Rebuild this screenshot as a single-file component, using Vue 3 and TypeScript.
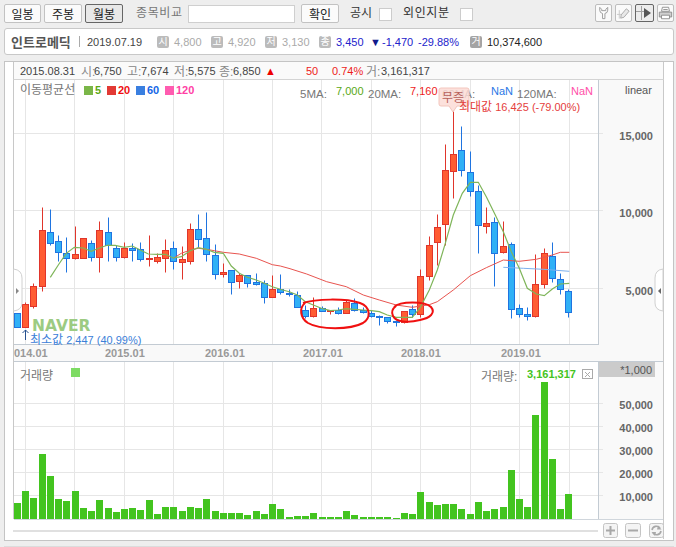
<script setup lang="ts">
type Row = [number, number, number, number, number]
const z3: Row[] = [
  [370,410,370,410,0],[335,410,343,410,1],[280,355,289,347,1],[52,303,120,287,1],[58,165,127,158,0],
  [135,212,154,185,0],[142,245,190,203,0],[108,208,193,203,1],[145,203,145,203,1],[150,212,160,200,0],
  [94,245,120,200,1],[82,212,127,166,0],[165,212,175,200,0],[157,205,175,200,1],[160,212,174,179,0],
  [157,212,178,206,0],[135,228,203,205,1],[190,220,202,212,1],[148,245,181,203,1],[154,236,175,212,0],
  [168,268,208,215,1],[100,223,118,212,1],[72,172,118,148,0],[67,212,145,193,0],[163,268,196,253,0],
  [220,262,247,253,1],[241,313,241,277,0],[250,295,256,274,1],[256,290,256,280,0],[250,285,277,283,0],
  [270,340,280,322,0],[256,322,298,322,1],[253,313,298,307,0],[298,318,310,313,0]
]
const z4: Row[] = [
  [572,622,586,622,0],[615,655,631,647,0],[590,650,625,647,1],[618,632,625,632,0],[630,642,630,632,1],
  [622,642,631,640,0],[600,640,607,640,1],[594,634,610,631,0],[620,640,631,637,0],[630,652,640,649,0],
  [644,674,649,652,0],[650,670,652,664,0],[660,677,664,667,0],[634,670,634,667,1],[614,650,628,643,0],
  [508,652,529,643,1],[408,541,436,529,1],[343,496,382,427,1],[133,436,211,373,1],[30,295,163,214,1],
  [79,229,151,211,0],[154,289,217,274,0],[256,460,274,376,0],[322,400,370,379,1],[352,559,367,460,0],
  [364,460,439,457,1],[427,655,433,628,0],[612,650,625,643,0],[622,661,643,649,0],[463,652,553,649,1],
  [445,565,460,553,1],[427,547,469,535,0],[520,583,538,568,0],[568,652,574,637,0]
]
const center = (i: number) => Math.round(14 + 8.23 * i) + 3.5
const snap = (v: number) => Math.round(v) + 0.5
const conv = (r: Row, base: number, offset: number, i: number) => {
  const y = (n: number) => snap(base + n / 3)
  const top = y(r[2])
  return {
    id: offset + i,
    x: center(offset + i),
    wt: y(r[0]),
    wb: y(r[1]),
    top,
    h: Math.max(y(r[3]) - top, 1),
    up: r[4] === 1
  }
}
const candles = [...z3.map((r, i) => conv(r, 190, 0, i)), ...z4.map((r, i) => conv(r, 100, 34, i))]

const volTops = [
  429,393,414,282,348,417,423,393,444,453,420,444,456,447,444,450,420,462,441,441,453,441,444,417,453,459,459,459,465,453,462,432,447,471,468,468,459,471,471,471,
  453,465,471,471,471,471,474,459,462,396,426,435,432,432,447,462,426,453,447,441,330,417,441,165,66,297,447,402
]
const volumes = volTops.map((t, i) => ({ id: i, x: Math.round(14 + 8.23 * i), y: 360 + t / 3, h: 159 - t / 3 }))

const pts = (a: number[][], bx: number, by: number) =>
  a.map(p => `${(bx + p[0] / 3).toFixed(1)},${(by + p[1] / 3).toFixed(1)}`).join(' ')
const ma5 =
  pts([[151,262],[175,225],[199,190],[223,172],[250,174],[274,184],[298,174],[322,166],[346,166],[373,172],[397,168],[421,180],[445,192],[472,193],[496,193],[520,204],[544,200],[571,182],[595,173],[619,178],[643,187],[670,190],[694,228],[718,250],[742,262],[769,270],[793,280],[817,290],[841,298]], 0, 190) +
  ' ' +
  pts([[0,576],[22,585],[46,605],[70,615],[94,625],[121,632],[145,630],[169,626],[193,628],[220,630],[244,632],[268,635],[292,645],[319,652],[343,652],[367,652],[391,622],[418,570],[442,510],[466,430],[490,345],[517,280],[541,247],[565,247],[589,290],[616,345],[640,395],[664,455],[688,505],[712,565],[739,582],[763,587],[787,567],[811,552],[838,550]], 290, 100)
const ma20 =
  pts([[520,205],[544,190],[571,180],[595,175],[619,178],[643,182],[670,187],[718,192],[769,205],[817,224],[841,228]], 0, 190) +
  ' ' +
  pts([[0,506],[50,522],[110,545],[169,560],[220,585],[268,600],[319,615],[367,622],[418,614],[442,605],[490,570],[541,527],[589,503],[640,480],[688,484],[739,478],[787,465],[811,457],[838,457]], 290, 100)
const ma60 = pts([[640,502],[700,505],[760,508],[838,514]], 290, 100)

const gridX = [25.5, 74.5, 124.5, 173.5, 223.5, 272.5, 321.5, 371.5, 420.5, 470.5, 519.5, 569.5]
const priceGrid = [
  { y: 133.5, label: '15,000' },
  { y: 210.5, label: '10,000' },
  { y: 288.5, label: '5,000' }
]
const volGrid = [
  { y: 403.5, label: '50,000' },
  { y: 426.5, label: '40,000' },
  { y: 449.5, label: '30,000' },
  { y: 472.5, label: '20,000' },
  { y: 495.5, label: '10,000' }
]
const axisDates = [
  { x: 14, t: '014.01' },
  { x: 105, t: '2015.01' },
  { x: 205, t: '2016.01' },
  { x: 303, t: '2017.01' },
  { x: 401, t: '2018.01' },
  { x: 501, t: '2019.01' }
]
const legend = [
  { x: 84, c: '#7ab648', tc: '#5aa815', t: '5' },
  { x: 107, c: '#e23a35', tc: '#f00f0f', t: '20' },
  { x: 136, c: '#3a7fe0', tc: '#1466e6', t: '60' },
  { x: 165, c: '#ff5cb0', tc: '#ff3fa5', t: '120' }
]
const maLabels = [
  { x: 300, t: '5MA:', vx: 336, v: '7,000', c: '#5aa815' },
  { x: 368, t: '20MA:', vx: 410, v: '7,160', c: '#ee1c1c' },
  { x: 442, t: '60MA:', vx: 491, v: 'NaN', c: '#2a78e6' },
  { x: 517, t: '120MA:', vx: 571, v: 'NaN', c: '#ff4fa8' }
]
</script>

<template>
  <div class="page">
    <div class="toolbar">
      <button class="btn b-a">일봉</button>
      <button class="btn b-b">주봉</button>
      <button class="btn b-c pressed">월봉</button>
      <span class="lbl compare">종목비교</span>
      <input class="field" type="text" />
      <button class="btn b-ok">확인</button>
      <span class="lbl dark notice">공시</span>
      <span class="check"></span>
      <span class="lbl dark foreign">외인지분</span>
      <span class="check"></span>
      <div class="tools">
        <span class="tool">
          <svg width="15" height="16" viewBox="0 0 16 16" fill="none" stroke="#999">
            <path d="M4 2 L4 5 Q4 8 7 8.5 L7 14 L9.5 14 L9.5 8.5 Q12.5 8 12.5 5 L12.5 2 L10.5 4 L10.5 5.5 L6 5.5 L6 4 Z" fill="#fff" />
          </svg>
        </span>
        <span class="tool">
          <svg width="15" height="16" viewBox="0 0 16 16" fill="none" stroke="#a8a8a8">
            <path d="M1 9.5 L6 9.5 M3.5 5 L3.5 14" stroke="#c8c8c8" />
            <path d="M5.5 10 L11 3.5 L14 6 L8.5 12.5 L5 13.5 Z" fill="#e8e8e8" />
          </svg>
        </span>
        <span class="tool active">
          <svg width="17" height="16" viewBox="0 0 17 16" fill="none">
            <path d="M0 6.5 L9 6.5 M5.5 1 L5.5 15" stroke="#a0a0a0" />
            <path d="M8 3 L15 8 L8 13 Z" fill="#555" />
          </svg>
        </span>
        <span class="tool">
          <svg width="17" height="16" viewBox="0 0 17 16" fill="#e4e4e4" stroke="#888">
            <path d="M5 1.5 L12 1.5 L13 6 L4 6 Z" fill="#fff" />
            <path d="M1.5 7 L15.5 7 L15.5 12.5 L1.5 12.5 Z" fill="#cfcfcf" />
            <path d="M4 10.5 L13 10.5 L13 14.5 L4 14.5 Z" fill="#fff" />
            <path d="M6 4 L11 4" />
          </svg>
        </span>
      </div>
    </div>

    <div class="info">
      <strong class="name">인트로메딕</strong>
      <span class="sep"></span>
      <span class="date">2019.07.19</span>
      <span class="chip">시</span><span class="muted">4,800</span>
      <span class="chip">고</span><span class="muted">4,920</span>
      <span class="chip">저</span><span class="muted">3,130</span>
      <span class="chip">종</span><span class="down close">3,450</span>
      <span class="down tri">▼</span><span class="down diff">-1,470</span>
      <span class="down pct">-29.88%</span>
      <span class="chip vol">거</span><span class="total">10,374,600</span>
    </div>

    <div class="panel">
      <div class="strip">
        <span class="s-date">2015.08.31</span>
        <span class="s-k s1">시:</span><span class="s-v">6,750</span>
        <span class="s-k s2">고:</span><span class="s-v">7,674</span>
        <span class="s-k s2">저:</span><span class="s-v">5,575</span>
        <span class="s-k s3">종:</span><span class="s-v">6,850</span>
        <span class="s-up tri-up">▲</span>
        <span class="s-up s-50">50</span>
        <span class="s-up s-pct">0.74%</span>
        <span class="s-k s3 s-last">거:</span><span>3,161,317</span>
      </div>

      <svg class="chart" width="668" height="459" viewBox="5 80 668 459" font-family="'Liberation Sans','Noto Sans CJK KR',sans-serif">
        <rect x="599" y="80" width="64" height="440" fill="#f9f9f9" />
        <line x1="663.5" y1="80" x2="663.5" y2="539" stroke="#c9c9c9" />
        <rect x="14" y="344" width="585" height="17" fill="#f9f9f9" />

        <g stroke="#e6e6e6">
          <line v-for="x in gridX" :key="'a' + x" :x1="x" y1="80" :x2="x" y2="344" />
          <line v-for="x in gridX" :key="'b' + x" :x1="x" y1="362" :x2="x" y2="519" />
          <line v-for="g in priceGrid" :key="g.y" x1="14" :y1="g.y" x2="603" :y2="g.y" />
          <line v-for="g in volGrid" :key="g.y" x1="14" :y1="g.y" x2="603" :y2="g.y" />
        </g>
        <g stroke="#c3cbd3">
          <line x1="13.5" y1="80" x2="13.5" y2="519" stroke="#c8c8c8" />
          <line x1="598.5" y1="80" x2="598.5" y2="344" />
          <line x1="598.5" y1="362" x2="598.5" y2="519" />
          <line x1="14" y1="344.5" x2="599" y2="344.5" />
          <line x1="14" y1="361.5" x2="663" y2="361.5" />
          <line x1="14" y1="519.5" x2="663" y2="519.5" stroke="#d0d6dc" />
        </g>

        <!-- legend -->
        <text x="20" y="94" font-size="12" fill="#777">이동평균선</text>
        <g v-for="l in legend" :key="l.t">
          <rect :x="l.x" y="86" width="9" height="9" :fill="l.c" />
          <text :x="l.x + 11" y="94" font-size="11" font-weight="700" :fill="l.tc">{{ l.t }}</text>
        </g>
        <g v-for="m in maLabels" :key="m.t">
          <text :x="m.x" y="98" font-size="11.5" fill="#777">{{ m.t }}</text>
          <text :x="m.vx" y="95" font-size="11" :fill="m.c">{{ m.v }}</text>
        </g>
        <text x="625" y="94" font-size="11" fill="#555">linear</text>

        <!-- candles -->
        <g v-for="c in candles" :key="c.id">
          <line :x1="c.x" :y1="c.wt" :x2="c.x" :y2="c.wb" :stroke="c.up ? '#e0352b' : '#1f74e0'" />
          <rect :x="c.x - 3" :y="c.top" width="6" :height="c.h" :fill="c.up ? '#ff5c33' : '#30b0f6'" :stroke="c.up ? '#e0352b' : '#1f74e0'" />
        </g>

        <polyline :points="ma60" fill="none" stroke="#7db0ee" stroke-width="1" />
        <polyline :points="ma20" fill="none" stroke="#e8544f" stroke-width="1" />
        <polyline :points="ma5" fill="none" stroke="#7fb55a" stroke-width="1.2" />

        <!-- hand-drawn marks -->
        <g fill="none" stroke="#f01010" stroke-width="2">
          <path d="M303,303 C315,299 345,298 360,303 C371,307 371,318 363,323 C350,330 320,330 308,323 C300,318 299,308 305,303" />
          <path d="M394,307 C400,301 425,301 431,307 C436,313 430,318 420,320 C408,323 396,322 393,316 C391,312 392,309 396,306" />
        </g>

        <!-- event tag -->
        <path d="M441,88 H467 Q469,88 469,90 V104 Q469,106 467,106 H457 L453,112 L449,106 H441 Q439,106 439,104 V90 Q439,88 441,88 Z" fill="#fbdcd6" fill-opacity="0.85" stroke="#f3c6bd" />
        <text x="442" y="102" font-size="12" fill="#b8605a">무증</text>
        <text x="459" y="111" font-size="11" fill="#e5403c"><tspan font-size="12">최대값</tspan> 16,425 (-79.00%)</text>

        <text x="32" y="331" font-family="'DejaVu Sans',sans-serif" font-size="15.5" font-weight="700" fill="#9ccb82">NAVER</text>
        <path d="M25.5,340 V330 M22.5,333 L25.5,330 L28.5,333" fill="none" stroke="#25508f" />
        <text x="30" y="344" font-size="11" fill="#3b80d8"><tspan font-size="12">최소값</tspan> 2,447 (40.99%)</text>

        <g font-size="11" font-weight="700" fill="#666" text-anchor="end">
          <text v-for="g in priceGrid" :key="g.label" x="653" :y="g.y + 6">{{ g.label }}</text>
          <text v-for="g in volGrid" :key="g.label" x="653" :y="g.y + 5">{{ g.label }}</text>
        </g>
        <g font-size="11" font-weight="700" fill="#999">
          <text v-for="d in axisDates" :key="d.t" :x="d.x" y="357">{{ d.t }}</text>
        </g>

        <!-- volume -->
        <rect x="599" y="362" width="56" height="15" fill="#cbcbcb" />
        <text x="652" y="374" font-size="11" fill="#555" text-anchor="end">*1,000</text>
        <text x="20" y="380" font-size="12" fill="#777">거래량</text>
        <rect x="71" y="368" width="9" height="9" fill="#7ddb63" />
        <text x="481" y="381" font-size="12" fill="#777">거래량:</text>
        <text x="527" y="378" font-size="11" font-weight="700" fill="#44c422">3,161,317</text>
        <g fill="none" stroke="#aaa">
          <rect x="582.5" y="369.5" width="10" height="9" />
          <path d="M585,372 L590,377 M590,372 L585,377" />
        </g>
        <rect v-for="v in volumes" :key="v.id" :x="v.x" :y="v.y" width="7" :height="v.h" fill="#43c41f" />

        <!-- scroller -->
        <rect x="13" y="530" width="585" height="2" fill="#e0e0e0" />
        <g fill="#f4f4f4" stroke="#c4c4c4">
          <rect x="603.5" y="523.5" width="14" height="14" rx="2" />
          <rect x="625.5" y="523.5" width="15" height="14" rx="2" />
          <rect x="649.5" y="523.5" width="14" height="14" rx="2" />
        </g>
        <path d="M606,530.5 H615 M610.5,526 V535 M628,530.5 H638" stroke="#a8a8a8" stroke-width="2" />
        <path d="M652,530 A4.5,4.5 0 0 1 660,528 M661,531 A4.5,4.5 0 0 1 653,533" fill="none" stroke="#a8a8a8" stroke-width="1.6" />
        <path d="M658,525.5 L661.5,529.5 L657,529.5 Z M655,536 L651.5,532 L656,532 Z" fill="#a8a8a8" />

        <!-- side handles -->
        <path d="M13.5,269 Q22,270 22,278 V303 Q22,310 13.5,311 Z" fill="#fff" stroke="#d0d0d0" />
        <path d="M16,288 L19,291 L16,294 Z" fill="#888" />
        <path d="M663,269 Q655,270 655,278 V303 Q655,310 663,311 Z" fill="#fff" stroke="#d0d0d0" />
        <path d="M661,288 L658,291 L661,294 Z" fill="#666" />
      </svg>
    </div>
    <div class="foot"></div>
  </div>
</template>

<style scoped>
.page {
  width: 676px;
  height: 547px;
  background: #eeeeee;
  overflow: hidden;
  font-family: "Liberation Sans", "Noto Sans CJK KR", sans-serif;
  font-size: 11px;
  color: #333;
  box-sizing: border-box;
  padding: 4px 2px 0 4px;
}
.toolbar {
  display: flex;
  align-items: flex-start;
  height: 24px;
  font-size: 12px;
}
.btn {
  height: 19px;
  padding: 0;
  background: #fbfbfb;
  border: 1px solid #c2c2c2;
  border-radius: 2px;
  font: 12px "Liberation Sans", "Noto Sans CJK KR", sans-serif;
  color: #222;
}
.b-a { width: 37px; }
.b-b { width: 38px; margin-left: 3px; }
.b-c { width: 38px; margin-left: 3px; }
.pressed {
  background: #e8e8e8;
  border: 1px solid #666;
}
.b-ok { width: 38px; margin-left: 6px; }
.lbl {
  color: #777;
  line-height: 19px;
  white-space: nowrap;
  letter-spacing: 0.6px;
}
.dark { color: #333; }
.compare { width: 52px; margin-left: 13px; }
.field {
  width: 107px;
  height: 18px;
  margin: 1px 0 0 0;
  padding: 0;
  box-sizing: border-box;
  background: #fff;
  border: 1px solid #cfcfcf;
}
.notice { width: 29px; margin-left: 11px; letter-spacing: 0; }
.foreign { width: 57px; margin-left: 11px; }
.check {
  width: 11px;
  height: 11px;
  margin-top: 4px;
  background: #fff;
  border: 1px solid #cccccc;
}
.tools {
  display: flex;
  gap: 3px;
  margin-left: auto;
}
.tool {
  width: 17px;
  height: 18px;
  display: flex;
  align-items: center;
  justify-content: center;
  background: #fafafa;
  border: 1px solid #bdbdbd;
  border-radius: 2px;
  box-sizing: border-box;
}
.tool.active {
  border-color: #666;
  background: #ececec;
  width: 19px;
}
.info {
  display: flex;
  align-items: center;
  height: 27px;
  box-sizing: border-box;
  background: #fff;
  border: 1px solid #c8c8c8;
  border-radius: 3px;
  padding-left: 6px;
  white-space: nowrap;
}
.name {
  width: 60px;
  font-size: 13px;
  color: #555;
}
.sep {
  width: 1px;
  height: 11px;
  margin-left: 8px;
  background: #aaa;
}
.date {
  width: 60px;
  margin-left: 7px;
  color: #444;
}
.chip {
  width: 12px;
  height: 12px;
  margin-left: 10px;
  margin-right: 5px;
  border-radius: 2px;
  background: #bbbbbb;
  color: #fff;
  font-size: 10px;
  line-height: 12px;
  text-align: center;
}
.muted { width: 27px; color: #aaa; }
.down { color: #2222cc; }
.close { width: 27px; }
.tri { width: 8px; margin-left: 7px; margin-right: 4px; font-size: 11px; color: #111a8c; }
.diff { width: 32px; }
.pct { width: 42px; margin-left: 4px; }
.vol { background: #a4a4a4; }
.total { color: #222; }
.panel {
  margin-top: 6px;
  height: 480px;
  box-sizing: border-box;
  background: #fff;
  border: 1px solid #c4c4c4;
}
.strip {
  display: flex;
  align-items: center;
  height: 18px;
  margin-left: 8px;
  width: 651px;
  box-sizing: border-box;
  padding-left: 6px;
  background: #fafafa;
  border-left: 1px solid #c8c8c8;
  border-right: 1px solid #c9c9c9;
  border-bottom: 1px solid #d4d4d4;
  color: #444;
  white-space: nowrap;
}
.s-date { width: 61px; }
.s-k { color: #888; font-size: 12px; width: 14px; }
.s-v { width: 27px; }
.s1 { width: 13px; }
.s2 { margin-left: 6px; }
.s3 { margin-left: 4px; }
.s-last { width: 15px; }
.s-up { color: #ee1c1c; }
.tri-up { width: 8px; margin-left: 5px; font-size: 11px; color: #e00; }
.s-50 { width: 12px; margin-left: 33px; }
.s-pct { width: 30px; margin-left: 14px; }
.chart { display: block; }
.foot {
  height: 1px;
  margin-top: 5px;
  background: #dcdcdc;
}
</style>
